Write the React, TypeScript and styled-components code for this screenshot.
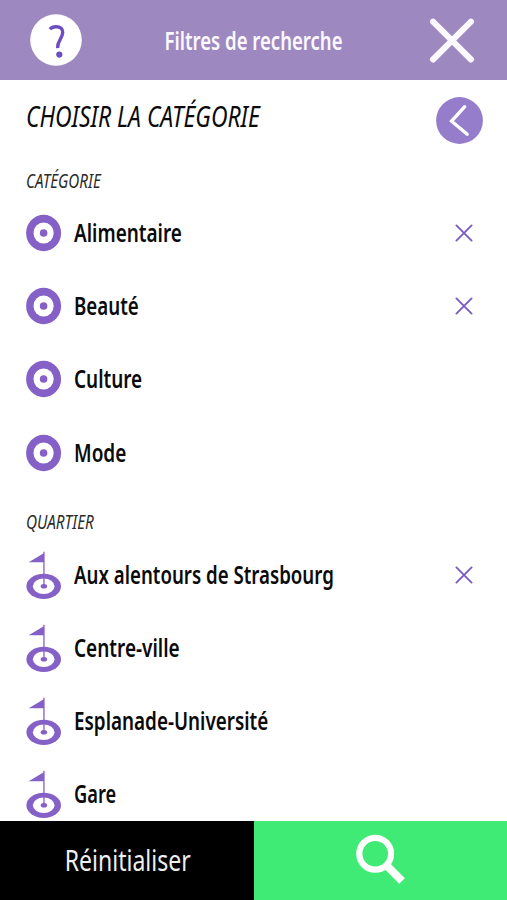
import React from 'react';
import styled, { createGlobalStyle, css } from 'styled-components';

const GlobalStyle = createGlobalStyle`
  *, *::before, *::after { box-sizing: border-box; }
  html, body { margin: 0; background: #fff; }
  button { border: 0; margin: 0; padding: 0; background: none; color: inherit; font: inherit; }
  svg { display: block; flex: none; }
`;

const violet = '#8560c6';

const Screen = styled.div`
  display: flex;
  flex-direction: column;
  height: 900px;
  max-height: 100vh;
  overflow: hidden;
  background: #fff;
  color: #0b0b0c;
  font-family: 'Noto Sans', 'Open Sans', sans-serif;
`;

/* Narrows the regular-width face to condensed proportions. */
const Condensed = styled.span<{ $stretch: number; $center?: boolean }>`
  display: inline-block;
  white-space: nowrap;
  transform: scaleX(${(p) => p.$stretch});
  transform-origin: ${(p) => (p.$center ? 'center' : 'left center')};
`;

const Header = styled.header`
  display: grid;
  grid-template-columns: 52px 1fr 46px;
  align-items: center;
  flex: none;
  height: 80px;
  padding: 0 32px 0 30px;
  background: #9d89bf;
`;

const Title = styled.h1`
  margin: 1px 0 0;
  padding-right: 3px;
  text-align: center;
  font-size: 24.5px;
  line-height: 34px;
  font-weight: 600;
  color: #fcf8ff;
`;

const IconButton = styled.button`
  display: flex;
`;

const Content = styled.main`
  flex: 1;
  min-height: 0;
  overflow: hidden;
`;

const Heading = styled.div`
  display: flex;
  align-items: flex-start;
  justify-content: space-between;
  height: 67.7px;
  padding: 16.5px 24px 0 25.5px;
`;

const HeadingText = styled.h2`
  margin: -1px 0 0;
  font-size: 29.5px;
  line-height: 39px;
  font-style: italic;
  font-weight: 400;
`;

const SectionLabel = styled.h3`
  height: 48.5px;
  margin: 0;
  padding: 19px 0 0 25.5px;
  font-size: 19.5px;
  line-height: 28px;
  font-style: italic;
  font-weight: 400;
  color: #2b2b2b;
`;

const List = styled.ul`
  margin: 0;
  padding: 0;
  list-style: none;
`;

const Row = styled.li`
  display: grid;
  grid-template-columns: 36px 1fr 18px;
  column-gap: 12px;
  align-items: center;
  height: 73.3px;
  padding: 0 34px 0 26px;
`;

const RowLabel = styled.span`
  font-size: 24.5px;
  line-height: 34px;
  font-weight: 600;
`;

const Footer = styled.footer`
  display: grid;
  grid-template-columns: 254px 1fr;
  flex: none;
  height: 79.3px;
`;

const FooterButton = styled.button<{ $primary?: boolean }>`
  display: flex;
  align-items: center;
  justify-content: center;
  ${(p) =>
    p.$primary
      ? css`
          background: #3feb74;
        `
      : css`
          padding-left: 2px;
          background: #000;
          color: #efefef;
          font-size: 29.5px;
          line-height: 40px;
          font-weight: 400;
        `}
`;

const HelpIcon = () => (
  <svg width="52" height="52" viewBox="0 0 52 52" fill="none">
    <circle cx="26" cy="26" r="25.8" fill="#fff" />
    <path d="M19.8 15.2C21.7 13.2 24 12.6 26.3 12.7C30.5 12.8 32.9 14.9 32.7 18.5C32.4 25 27.2 26.3 27.6 34.2" stroke="#6d4ec2" strokeWidth="3.4" />
    <circle cx="29.3" cy="40.6" r="3.1" fill="#6d4ec2" />
  </svg>
);

const CloseIcon = () => (
  <svg width="46" height="46" viewBox="0 0 46 46" stroke="#fcf8ff" strokeWidth="6" strokeLinecap="round">
    <path d="M4 4.7L42 42.5M42 4.7L4 42.5" />
  </svg>
);

const BackIcon = () => (
  <svg width="47" height="47" viewBox="0 0 47 47" fill="none">
    <circle cx="23.5" cy="23.5" r="23.4" fill="#957dcc" />
    <path d="M28.7 9.7L15.6 24.2L31.2 37.2" stroke="#fff" strokeWidth="3.4" strokeLinecap="round" />
  </svg>
);

const TargetIcon = () => (
  <svg width="36" height="38" viewBox="0 0 36 38">
    <ellipse cx="17.6" cy="19" rx="17.5" ry="18.2" fill={violet} />
    <ellipse cx="17.6" cy="19" rx="10.1" ry="10.5" fill="#fff" />
    <circle cx="17.6" cy="19" r="3.8" fill={violet} />
  </svg>
);

const FlagIcon = () => (
  <svg width="36" height="48" viewBox="0 0 36 48">
    <ellipse cx="17.7" cy="35.3" rx="17.3" ry="12.6" fill={violet} />
    <ellipse cx="17.7" cy="35.3" rx="10.8" ry="7.8" fill="#fff" />
    <ellipse cx="17.9" cy="35.3" rx="3.2" ry="2.3" fill={violet} />
    <path d="M17.3 0.7H18.6V35H17.3V11.2H2.7L17.3 2.4Z" fill={violet} />
  </svg>
);

const RemoveIcon = () => (
  <svg width="18" height="18" viewBox="0 0 18 18" stroke="#7b5cc4" strokeWidth="1.9" strokeLinecap="round">
    <path d="M1.4 1.4L16.6 16.6M16.6 1.4L1.4 16.6" />
  </svg>
);

const SearchIcon = () => (
  <svg width="50" height="52" viewBox="0 0 50 52" fill="none" stroke="#fff">
    <circle cx="19.2" cy="19.7" r="15.9" strokeWidth="6.2" />
    <path d="M29.5 30.3L46 47" strokeWidth="8" />
  </svg>
);

type Item = { label: string; stretch: number; selected?: boolean };

const categories: Item[] = [
  { label: 'Alimentaire', stretch: 0.773, selected: true },
  { label: 'Beauté', stretch: 0.765, selected: true },
  { label: 'Culture', stretch: 0.772 },
  { label: 'Mode', stretch: 0.775 },
];

const districts: Item[] = [
  { label: 'Aux alentours de Strasbourg', stretch: 0.762, selected: true },
  { label: 'Centre-ville', stretch: 0.775 },
  { label: 'Esplanade-Université', stretch: 0.77 },
  { label: 'Gare', stretch: 0.745 },
];

const ItemList = ({ items, icon }: { items: Item[]; icon: React.ReactNode }) => (
  <List>
    {items.map((item) => (
      <Row key={item.label}>
        {icon}
        <RowLabel>
          <Condensed $stretch={item.stretch}>{item.label}</Condensed>
        </RowLabel>
        {item.selected && (
          <IconButton aria-label="Retirer">
            <RemoveIcon />
          </IconButton>
        )}
      </Row>
    ))}
  </List>
);

export default function App() {
  return (
    <>
      <GlobalStyle />
      <Screen>
        <Header>
          <IconButton aria-label="Aide">
            <HelpIcon />
          </IconButton>
          <Title>
            <Condensed $stretch={0.757} $center>
              Filtres de recherche
            </Condensed>
          </Title>
          <IconButton aria-label="Fermer">
            <CloseIcon />
          </IconButton>
        </Header>
        <Content>
          <Heading>
            <HeadingText>
              <Condensed $stretch={0.777}>CHOISIR LA CATÉGORIE</Condensed>
            </HeadingText>
            <IconButton aria-label="Retour">
              <BackIcon />
            </IconButton>
          </Heading>
          <SectionLabel>
            <Condensed $stretch={0.778}>CATÉGORIE</Condensed>
          </SectionLabel>
          <ItemList items={categories} icon={<TargetIcon />} />
          <SectionLabel>
            <Condensed $stretch={0.785}>QUARTIER</Condensed>
          </SectionLabel>
          <ItemList items={districts} icon={<FlagIcon />} />
        </Content>
        <Footer>
          <FooterButton>
            <Condensed $stretch={0.78} $center>
              Réinitialiser
            </Condensed>
          </FooterButton>
          <FooterButton $primary aria-label="Rechercher">
            <SearchIcon />
          </FooterButton>
        </Footer>
      </Screen>
    </>
  );
}
